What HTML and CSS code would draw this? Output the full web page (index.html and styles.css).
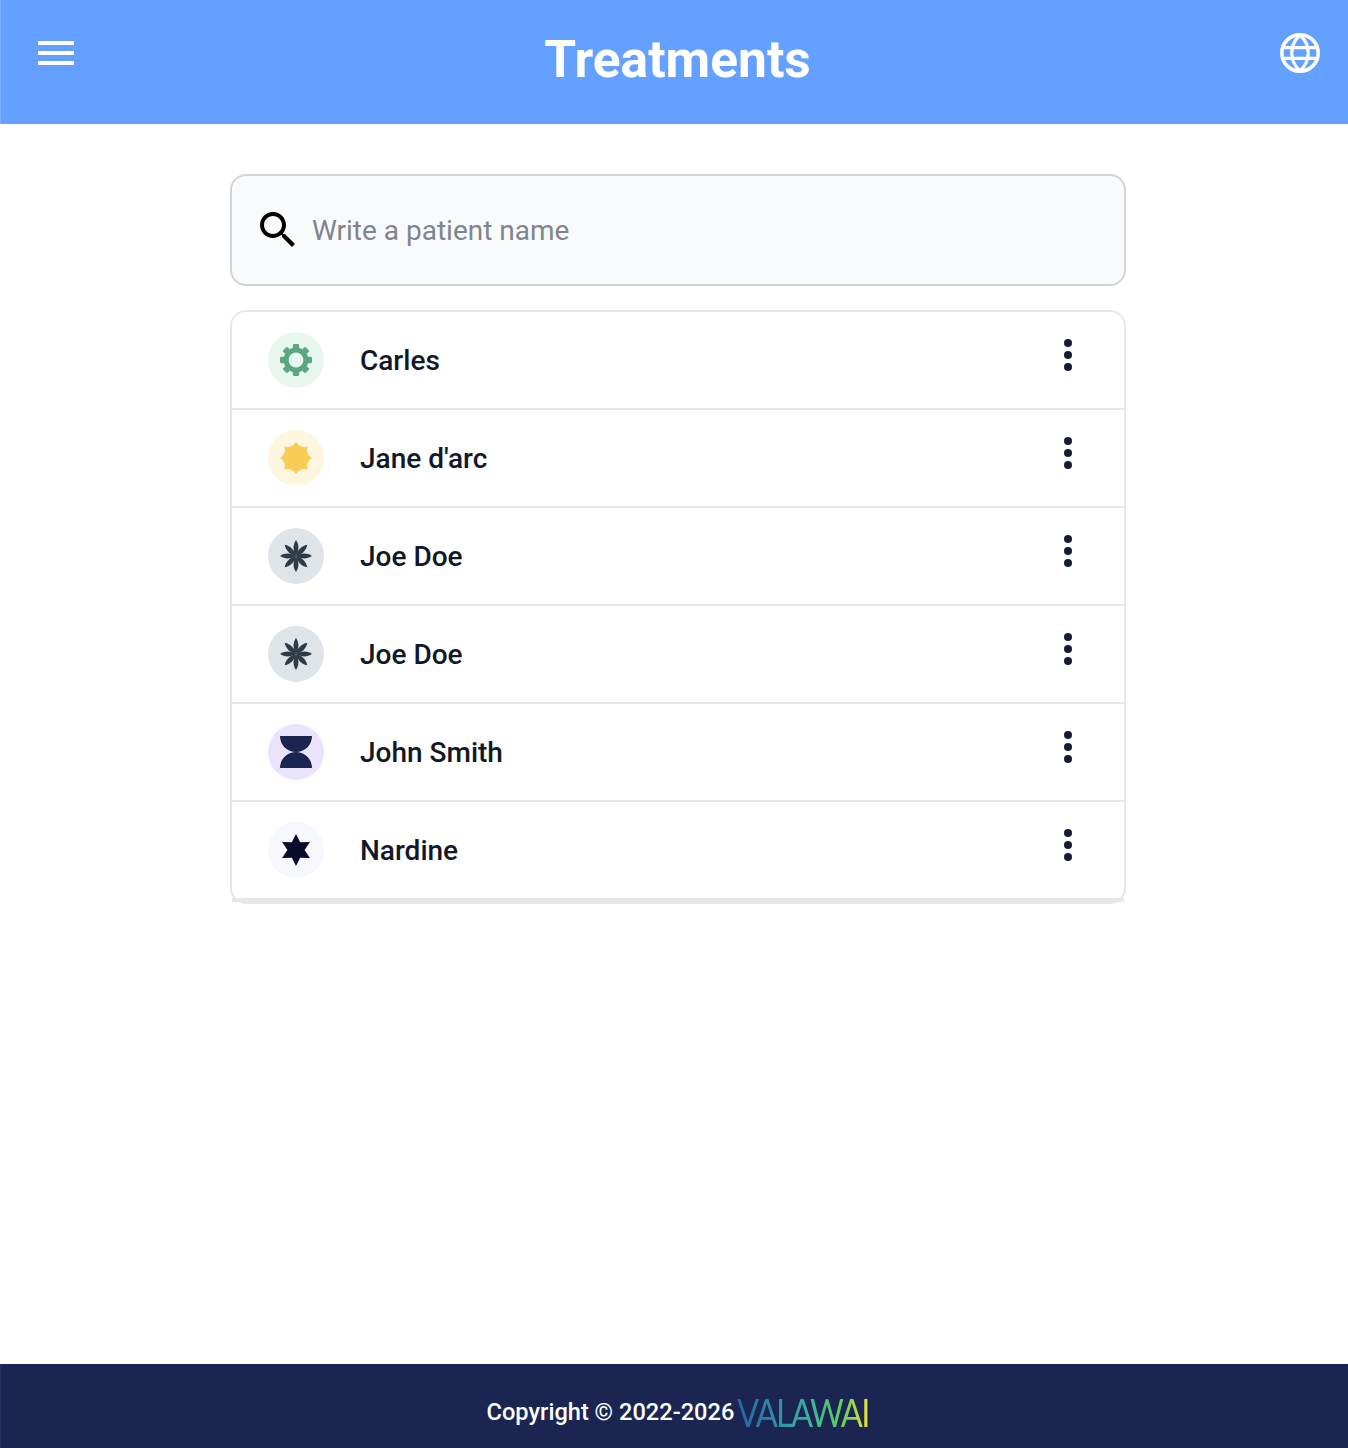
FILE: index.html
```html
<!DOCTYPE html>
<html lang="en">
<head>
<meta charset="utf-8">
<title>Treatments</title>
<link rel="stylesheet" href="styles.css">
</head>
<body>
<div class="page">
  <header class="topbar">
    <button class="menu-btn" aria-label="Menu"><span></span><span></span><span></span></button>
    <h1 class="title">Treatments</h1>
    <svg class="globe" viewBox="0 0 40 40" fill="none" stroke="#fff" stroke-width="3.6">
      <circle cx="20" cy="20" r="18.2"/>
      <path d="M20 2C31 12 31 28 20 38C9 28 9 12 20 2Z" stroke-width="3.2"/>
      <path d="M3 14.7h34M3 25.3h34" stroke-width="3.2"/>
    </svg>
  </header>
  <main class="main">
    <div class="content">
      <div class="search">
        <svg class="search-icon" viewBox="0 0 24 24"><path d="M15.5 14h-.79l-.28-.27C15.41 12.59 16 11.11 16 9.5 16 5.91 13.09 3 9.5 3S3 5.91 3 9.5 5.91 16 9.5 16c1.61 0 3.09-.59 4.23-1.57l.27.28v.79l5 4.99L20.49 19l-4.99-5zm-6 0C7.01 14 5 11.99 5 9.5S7.01 5 9.5 5 14 7.01 14 9.5 11.99 14 9.5 14z"/></svg>
        <input class="search-input" type="text" placeholder="Write a patient name">
      </div>
      <ul class="list">
        <li class="row">
          <span class="avatar av-green">
            <svg viewBox="0 0 32 32" class="glyph" fill="#5ca782">
              <circle cx="16" cy="16" r="9.9" fill="none" stroke="#5ca782" stroke-width="5"/>
              <g>
                <rect x="12.8" y="0" width="6.4" height="7.5" rx="1.4"/>
                <rect x="12.8" y="24.5" width="6.4" height="7.5" rx="1.4"/>
                <rect x="0" y="12.8" width="7.5" height="6.4" rx="1.4"/>
                <rect x="24.5" y="12.8" width="7.5" height="6.4" rx="1.4"/>
              </g>
              <g transform="rotate(45 16 16)">
                <rect x="12.8" y="0" width="6.4" height="7.5" rx="1.4"/>
                <rect x="12.8" y="24.5" width="6.4" height="7.5" rx="1.4"/>
                <rect x="0" y="12.8" width="7.5" height="6.4" rx="1.4"/>
                <rect x="24.5" y="12.8" width="7.5" height="6.4" rx="1.4"/>
              </g>
            </svg>
          </span>
          <span class="name">Carles</span>
          <button class="more" aria-label="More"><i></i><i></i><i></i></button>
        </li>
        <li class="row">
          <span class="avatar av-yellow">
            <svg viewBox="0 0 32 32" class="glyph" fill="#f9cc55"><path d="M16 0L18.7 3.28 23.08 5.1 27.6 4.4 26.9 8.92 28.72 13.3 32 16 28.72 18.7 26.9 23.08 27.6 27.6 23.08 26.9 18.7 28.72 16 32 13.3 28.72 8.92 26.9 4.4 27.6 5.1 23.08 3.28 18.7 0 16 3.28 13.3 5.1 8.92 4.4 4.4 8.92 5.1 13.3 3.28Z"/></svg>
          </span>
          <span class="name">Jane d'arc</span>
          <button class="more" aria-label="More"><i></i><i></i><i></i></button>
        </li>
        <li class="row">
          <span class="avatar av-grey">
            <svg viewBox="0 0 32 32" class="glyph" fill="#2d3a47">
              <path d="M16 16C13 11 12.5 5 16 0C19.5 5 19 11 16 16C13 21 12.5 27 16 32C19.5 27 19 21 16 16Z"/>
              <path transform="rotate(45 16 16)" d="M16 16C13 11 12.5 5 16 0C19.5 5 19 11 16 16C13 21 12.5 27 16 32C19.5 27 19 21 16 16Z"/>
              <path transform="rotate(90 16 16)" d="M16 16C13 11 12.5 5 16 0C19.5 5 19 11 16 16C13 21 12.5 27 16 32C19.5 27 19 21 16 16Z"/>
              <path transform="rotate(135 16 16)" d="M16 16C13 11 12.5 5 16 0C19.5 5 19 11 16 16C13 21 12.5 27 16 32C19.5 27 19 21 16 16Z"/>
            </svg>
          </span>
          <span class="name">Joe Doe</span>
          <button class="more" aria-label="More"><i></i><i></i><i></i></button>
        </li>
        <li class="row">
          <span class="avatar av-grey">
            <svg viewBox="0 0 32 32" class="glyph" fill="#2d3a47">
              <path d="M16 16C13 11 12.5 5 16 0C19.5 5 19 11 16 16C13 21 12.5 27 16 32C19.5 27 19 21 16 16Z"/>
              <path transform="rotate(45 16 16)" d="M16 16C13 11 12.5 5 16 0C19.5 5 19 11 16 16C13 21 12.5 27 16 32C19.5 27 19 21 16 16Z"/>
              <path transform="rotate(90 16 16)" d="M16 16C13 11 12.5 5 16 0C19.5 5 19 11 16 16C13 21 12.5 27 16 32C19.5 27 19 21 16 16Z"/>
              <path transform="rotate(135 16 16)" d="M16 16C13 11 12.5 5 16 0C19.5 5 19 11 16 16C13 21 12.5 27 16 32C19.5 27 19 21 16 16Z"/>
            </svg>
          </span>
          <span class="name">Joe Doe</span>
          <button class="more" aria-label="More"><i></i><i></i><i></i></button>
        </li>
        <li class="row">
          <span class="avatar av-purple">
            <svg viewBox="0 0 32 32" class="glyph" fill="#1a2552"><path d="M0 0H32C32 9 25 16 16 16C25 16 32 23 32 32H0C0 23 7 16 16 16C7 16 0 9 0 0Z"/></svg>
          </span>
          <span class="name">John Smith</span>
          <button class="more" aria-label="More"><i></i><i></i><i></i></button>
        </li>
        <li class="row row-last">
          <span class="avatar av-white">
            <svg viewBox="0 0 32 32" class="glyph" fill="#0a0a2a"><path d="M16 0L20.2 8.3 29.9 8 24.6 16 29.9 24 20.2 23.7 16 32 11.8 23.7 2.1 24 7.4 16 2.1 8 11.8 8.3Z"/></svg>
          </span>
          <span class="name">Nardine</span>
          <button class="more" aria-label="More"><i></i><i></i><i></i></button>
        </li>
      </ul>
    </div>
  </main>
  <footer class="footer">
    <span class="copy">Copyright © 2022-2026</span>
    <span class="logo">VALAWAI</span>
  </footer>
</div>
</body>
</html>
```

FILE: styles.css
```css
* { box-sizing: border-box; }
html, body { margin: 0; padding: 0; }
body { font-family: Roboto, "Liberation Sans", sans-serif; background: #fff; color: #111827; }
.page { min-height: 1448px; display: flex; flex-direction: column; }

.topbar {
  height: 124px; background: #64a0ff; border-left: 1px solid #7db0ff;
  position: relative; display: flex; justify-content: center; padding: 28px 0 0 6px;
}
.title { margin: 0; font-size: 51.5px; line-height: 64px; font-weight: 700; color: #fff; }
.menu-btn {
  position: absolute; left: 37px; top: 41px; width: 36px; height: 24px; padding: 0;
  background: none; border: 0; display: flex; flex-direction: column; justify-content: space-between;
}
.menu-btn span { display: block; height: 4px; background: #fff; }
.globe { position: absolute; right: 28px; top: 33px; width: 40px; height: 40px; }

.main { flex: 1; padding: 50px 0 0 8px; }
.content { width: 896px; margin: 0 auto; }
.search {
  height: 112px; background: #f9fafb; border: 2px solid #d1d5db; border-radius: 16px;
  display: flex; align-items: center; padding-left: 22px; gap: 10px;
}
.search-icon { width: 48px; height: 48px; flex: none; fill: #000; }
.search-input {
  flex: 1; border: 0; background: none; outline: none; padding: 0; height: 48px;
  font: 400 28px/40px Roboto, sans-serif; color: #111827;
}
.search-input::placeholder { color: #7f858f; opacity: 1; }

.list {
  list-style: none; margin: 24px 0 0; padding: 0;
  border: 2px solid #e5e7eb; border-radius: 16px; background: #fff;
}
.row {
  height: 98px; border-bottom: 2px solid #e5e7eb;
  display: flex; align-items: center; padding: 0 40px 0 36px;
}
.row-last { height: 100px; border-bottom-width: 4px; }
.avatar {
  width: 56px; height: 56px; border-radius: 50%; flex: none;
  display: flex; align-items: center; justify-content: center;
}
.glyph { width: 32px; height: 32px; display: block; }
.av-green { background: #e8f6f0; }
.av-yellow { background: #fff6df; }
.av-grey { background: #dfe4e9; }
.av-purple { background: #ebe2fb; }
.av-white { background: #f7f8fd; }
.name { margin-left: 36px; padding-top: 2px; font-size: 28px; line-height: 40px; font-weight: 500; color: #111827; flex: 1; }
.more {
  width: 24px; height: 32px; padding: 0; background: none; border: 0; margin-bottom: 10px; margin-right: 4px;
  display: flex; flex-direction: column; align-items: center; justify-content: space-between;
}
.more i { display: block; width: 8px; height: 8px; border-radius: 50%; background: #171c33; }

.footer {
  height: 84px; background: #1a2552; border-left: 1px solid #232e5c;
  display: flex; align-items: center; justify-content: center; gap: 3px; padding: 12px 0 0 8px;
}
.copy { font-size: 23.6px; line-height: 36px; font-weight: 500; color: #fff; }
.logo {
  display: inline-block; padding-right: 2px; margin-right: -22px;
  font-family: Lato, sans-serif; font-weight: 400; font-size: 38px; line-height: 40px; letter-spacing: -2px;
  transform: scaleX(.86); transform-origin: left center;
  background: linear-gradient(90deg, #2b5fa5 0%, #2f8fa8 30%, #3fb39a 55%, #5fcf5a 78%, #f2e33c 100%);
  -webkit-background-clip: text; background-clip: text; color: transparent;
}
```
